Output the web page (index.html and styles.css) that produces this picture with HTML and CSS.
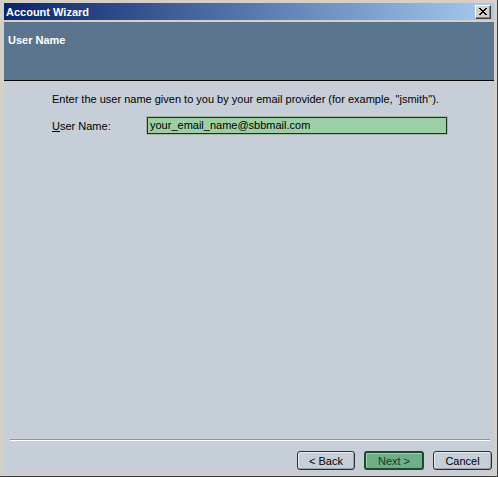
FILE: index.html
```html
<!DOCTYPE html>
<html>
<head>
<meta charset="utf-8">
<link rel="stylesheet" href="styles.css">
</head>
<body>
<div class="window">
  <div class="titlebar">
    <span class="title">Account Wizard</span>
    <span class="close">
      <svg width="8" height="7" viewBox="0 0 8 7" shape-rendering="crispEdges">
        <path d="M0 0h2v1H0zM6 0h2v1H6zM1 1h2v1H1zM5 1h2v1H5zM2 2h4v1H2zM3 3h2v1H3zM2 4h4v1H2zM1 5h2v1H1zM5 5h2v1H5zM0 6h2v1H0zM6 6h2v1H6z" fill="#000"/>
      </svg>
    </span>
  </div>
  <div class="header">User Name</div>
  <div class="content">
    <p class="intro">Enter the user name given to you by your email provider (for example, "jsmith").</p>
    <div class="field">
      <label class="label"><u>U</u>ser Name:</label>
      <div class="input">your_email_name@sbbmail.com</div>
    </div>
    <div class="footer">
      <div class="sep"></div>
      <div class="buttons">
        <button class="btn back">&lt; Back</button>
        <button class="btn next">Next &gt;</button>
        <button class="btn cancel">Cancel</button>
      </div>
    </div>
  </div>
</div>
</body>
</html>
```

FILE: styles.css
```css
html, body {
  margin: 0;
  padding: 0;
  background: #d4d0c8;
}
body {
  font-family: "Liberation Sans", Arial, sans-serif;
  font-size: 11px;
}
.window {
  width: 498px;
  height: 477px;
  box-sizing: border-box;
  background: #d4d0c8;
  border-right: 1px solid #404040;
  border-bottom: 1px solid #404040;
  padding: 3px 3px 3px 4px;
  display: flex;
  flex-direction: column;
}
.titlebar {
  height: 17px;
  flex: none;
  display: flex;
  align-items: center;
  justify-content: space-between;
  background: linear-gradient(to right, #0a246a, #a6caf0);
  padding: 0 3px 0 2px;
}
.title {
  color: #fff;
  font-weight: bold;
  font-size: 11px;
}
.close {
  width: 16px;
  height: 14px;
  box-sizing: border-box;
  background: #d4d0c8;
  border: 1px solid;
  border-color: #fff #404040 #404040 #fff;
  box-shadow: inset -1px -1px 0 #808080;
  display: flex;
  align-items: center;
  justify-content: center;
  padding: 0 1px 1px 0;
}
.close svg { display: block; }
.header {
  margin-top: 2px;
  flex: none;
  box-sizing: border-box;
  background: #5b758f;
  border-bottom: 1px solid #000;
  height: 59px;
  color: #fff;
  font-weight: bold;
  font-size: 11px;
  padding: 12px 0 0 4px;
}
.content {
  flex: 1;
  background: #c6ced8;
  display: flex;
  flex-direction: column;
  padding: 12px 0 3px 48px;
}
.intro {
  margin: 0;
  color: #000;
  line-height: 13px;
}
.field {
  display: flex;
  align-items: center;
  margin-top: 11px;
}
.label {
  width: 95px;
  color: #000;
}
.input {
  width: 300px;
  height: 17px;
  box-sizing: border-box;
  background: #9dcfa7;
  border: 1px solid #1f2f25;
  box-shadow: 0 0 0 1px #a8b4a8;
  padding: 1px 0 0 2px;
  line-height: 13px;
  color: #000;
}
.footer {
  margin-top: auto;
  margin-left: -42px;
  margin-right: 4px;
}
.sep {
  border-top: 1px solid #8a96a4;
  border-bottom: 1px solid #fff;
  height: 0;
}
.buttons {
  display: flex;
  justify-content: flex-end;
  gap: 9px;
  margin-top: 10px;
  margin-right: -2px;
}
.btn {
  height: 19px;
  box-sizing: border-box;
  font-family: "Liberation Sans", Arial, sans-serif;
  font-size: 11px;
  color: #000;
  background: #c6ced8;
  border: 1px solid #2a2e33;
  border-radius: 3px;
  box-shadow: inset 1px 1px 0 #e6eaf0, inset -1px -1px 0 #9aa4b0;
  padding: 0;
  margin: 0;
}
.back { width: 58px; }
.next {
  width: 60px;
  background: #6fae88;
  border: 2px solid #1d4a2c;
  box-shadow: inset 1px 1px 0 #9fd0b0;
  color: #183820;
}
.cancel { width: 59px; }
```
